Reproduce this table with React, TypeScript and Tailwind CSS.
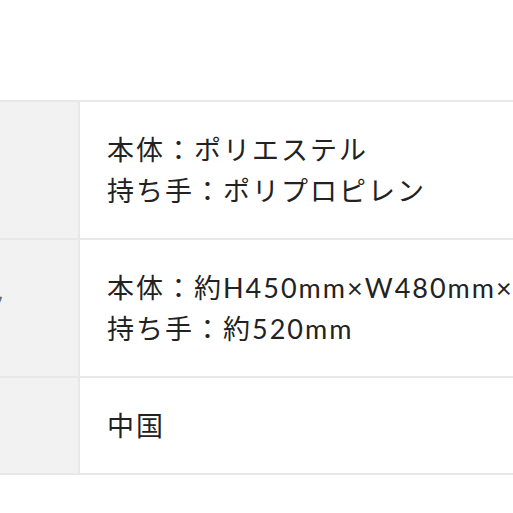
const rows = [
  { label: '素材', lines: ['本体：ポリエステル', '持ち手：ポリプロピレン'] },
  { label: 'サイズ・スペック', lines: ['本体：約H450mm×W480mm×D150mm', '持ち手：約520mm'] },
  { label: '原産国', lines: ['中国'] },
]

export default function App() {
  return (
    <div
      className="w-[513px] h-[513px] overflow-hidden bg-white pt-[100px]"
      style={{ fontFamily: 'Lato, "Noto Sans CJK JP", sans-serif' }}
    >
      {/* Spec table, scrolled so the label column is mostly hidden */}
      <div className="-ml-[138px] w-[900px] border-b-2 border-[#e8e8e8]">
        {rows.map((row) => (
          <div key={row.label} className="grid grid-cols-[218px_1fr] border-t-2 border-[#e8e8e8]">
            <div className="bg-[#f2f2f2] border-r-2 border-[#e8e8e8] flex items-center whitespace-nowrap">
              <span className="text-[18px] text-[#666] -mt-[14px]" style={{ fontFamily: '"Noto Sans CJK JP", sans-serif' }}>
                {row.label}
              </span>
            </div>
            <div className="pl-[27px] py-[27px] text-[27px] leading-[41px] tracking-[2px] text-[#222] whitespace-nowrap">
              {row.lines.map((line) => (
                <div key={line}>{line}</div>
              ))}
            </div>
          </div>
        ))}
      </div>
    </div>
  )
}
